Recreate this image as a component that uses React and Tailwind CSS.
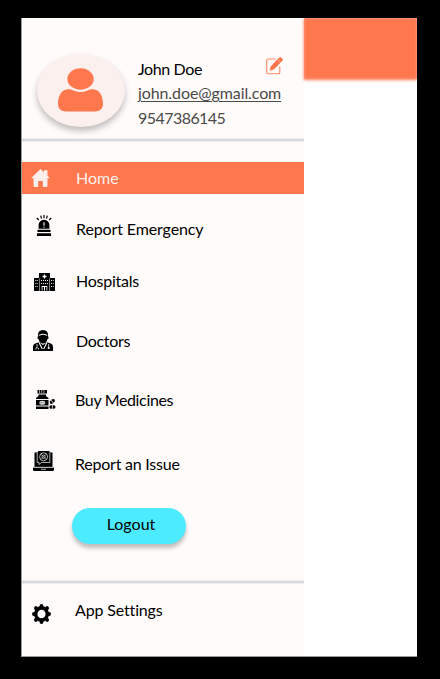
import React from "react";

function UserIcon() {
  return (
    <svg className="h-[44px] w-[46px]" viewBox="0 0 46 44" fill="#ff774d">
      <ellipse cx="22.5" cy="11" rx="13.2" ry="10.7" />
      <path d="M10.5 21.3c2.2-.5 3.600.5 5.600 1.400 4 1.800 8.800 1.800 12.800 0 2-.9 3.400-1.900 5.600-1.400C41 21.500 45 27 45 36c0 4.500-3 7.500-8 7.500H8c-5 0-8-3-8-7.500 0-9 4-14.500 10.500-14.700z" />
    </svg>
  );
}

function EditIcon() {
  return (
    <svg className="h-[18px] w-[17px]" viewBox="0 0 17 18" fill="none">
      <path d="M9.800 2H2Q.7 2 .7 3.300V15.500Q.7 16.800 2 16.800H12.500Q13.800 16.800 13.800 15.500V9.500" stroke="#ff8a66" strokeWidth="1.100" />
      <path d="M3.600 13.700 4.700 9.600 11.300 2.200 14.500 5.800 7.900 12.600ZM11.500 2 13.200.6Q14.500-.3 15.900.9T16.700 3.500L14.700 5.600Z" fill="#ff774d" />
    </svg>
  );
}

function HomeIcon() {
  return (
    <svg className="h-[18px] w-[19px]" viewBox="0 0 19 18" fill="#ffefec">
      <path d="M9.500 0 13 3.300V1.300h3.500v5.400L19 9.200H16.500V17q0 1-1 1H11.800V12H7.200v6H3.500q-1 0-1-1V9.200H0Z" />
    </svg>
  );
}

function SirenIcon() {
  return (
    <svg className="h-[21px] w-[16px]" viewBox="0 0 16 20" preserveAspectRatio="none">
      <path d="M8 0v3M4.700.6l.8 2.800M11.300.6l-.8 2.800M.7 2.800l2.200 2M15.300 2.800l-2.200 2" stroke="#000" strokeWidth="1.200" />
      <path d="M2.600 13V9.500a5.400 5 0 0 1 10.800 0V13ZM1.500 14h13v2.300h-13ZM1 17.300h14V20H1Z" />
      <path d="M8 7v3.300M8 11.200v1" stroke="#fff" strokeWidth="1.100" />
    </svg>
  );
}

function HospitalIcon() {
  return (
    <svg className="h-[18px] w-[21px]" viewBox="0 0 21 18">
      <path d="M0 5H5V0H16V5H21V18H0Z" />
      <path d="M10.500 1.500V5.500M8.500 3.500h4" stroke="#fff" strokeWidth="1.300" />
      <path d="M7 7.500h7M7 10.500h7M1.300 7.500H4M1.300 10.500H4M1.300 13.500H4M17 7.500h2.700M17 10.500h2.700M17 13.500h2.700" stroke="#fff" strokeWidth=".9" strokeDasharray="1.100 .9" />
      <path d="M5.500 5.500V18M15.500 5.500V18" stroke="#fff" strokeWidth=".5" />
      <path d="M7.700 13h5.600v4.500H7.700Z" fill="#fff" />
      <path d="M8.500 14h1.500v4H8.500ZM11 14h1.500v4H11Z" />
    </svg>
  );
}

function DoctorIcon() {
  return (
    <svg className="h-[21px] w-[20px]" viewBox="0 0 20 21">
      <path d="M5 6Q4.500 0 10 0t5 6l.7 2.200-1.200.8Q13.500 13.500 10 13.500T5.500 9L4.300 8.200Z" />
      <path d="M5.800 5.300Q10 3 14.200 5.300" stroke="#fff" strokeWidth="1" fill="none" />
      <path d="M0 21v-4q0-3 3-3.800l3-1L10 15l4-2.800 3 1q3 .8 3 3.800v4Z" />
      <path d="M6 12.500 9.300 19M14 12.500 10.700 19" stroke="#fff" strokeWidth="1.100" fill="none" />
      <path d="M4 14v2.500M3 19.500v-1.500q1.200-2 2.400 0v1.500M15.700 14v3" stroke="#fff" strokeWidth=".8" fill="none" />
      <circle cx="15.700" cy="18" r="1.100" fill="#fff" />
    </svg>
  );
}

function MedicineIcon() {
  return (
    <svg className="h-[19px] w-[20px]" viewBox="0 0 20 19">
      <path d="M1.500 0h9.500v3.500H1.500ZM2.500 4.500H10v1.500L12.500 8v1H0V8L2.500 6ZM0 10h12.500v5.500H0ZM0 16.500h12.500V19H0Z" />
      <path d="M3.500 0v3M5.700 0v3M7.900 0v3" stroke="#fff" strokeWidth=".6" />
      <ellipse cx="6.300" cy="12.800" rx="3" ry="2" fill="#ddd" />
      <path d="M4 12.800h4.500" stroke="#555" strokeWidth=".6" />
      <ellipse cx="16.300" cy="11.500" rx="2.900" ry="1.900" transform="rotate(-35 16.300 11.500)" />
      <path d="m15.300 10.200 2 2.700" stroke="#fff" strokeWidth=".8" />
      <rect x="13.300" y="15.300" width="6.200" height="3.400" rx="1.700" />
      <path d="M16.400 15v4" stroke="#fff" strokeWidth=".7" />
    </svg>
  );
}

function IssueIcon() {
  return (
    <svg className="h-[20px] w-[21px]" viewBox="0 0 21 20">
      <path d="M5 0H16.500V1.500H19.500V16H1.500V1.500H5Z" />
      <path d="M4.200 2V11.500H6V13.500L8.500 11.500H16.800V2" stroke="#ddd" strokeWidth=".8" fill="none" />
      <circle cx="10.600" cy="5.800" r="4" fill="none" stroke="#ddd" strokeWidth=".8" />
      <circle cx="10.600" cy="5.800" r="1.700" fill="none" stroke="#ddd" strokeWidth=".7" />
      <path d="m7.800 3 5.600 5.600M13.400 3 7.800 8.600" stroke="#ddd" strokeWidth=".6" />
      <path d="M0 16.500h21v2q0 1.500-1.500 1.500h-18Q0 20 0 18.500Z" />
      <path d="M1 16.300h19M8 18.300h5" stroke="#ddd" strokeWidth=".8" />
    </svg>
  );
}

function GearIcon() {
  return (
    <svg className="h-[20px] w-[19px]" viewBox="0 0 20 20" preserveAspectRatio="none">
      <g fill="none" stroke="#000" strokeLinecap="round">
        <circle cx="10" cy="10" r="6.100" strokeWidth="3.600" />
        <path d="M10 2v1M10 17v1M2 10h1M17 10h1M4.100 4.100l.7.7M15.200 15.200l.7.7M4.100 15.900l.7-.7M15.200 4.800l.7-.7" strokeWidth="4" />
      </g>
    </svg>
  );
}

const items = [
  { label: "Report Emergency", Icon: SirenIcon, row: "mt-[19px]", icon: "pl-[14px] pb-[7px]", text: "pl-[54px] tracking-[-0.12px]" },
  { label: "Hospitals", Icon: HospitalIcon, row: "mt-[20px]", icon: "pl-[12px] pt-[2px]", text: "pl-[54px] tracking-[-0.25px]" },
  { label: "Doctors", Icon: DoctorIcon, row: "mt-[28px]", icon: "pl-[11px] pb-[2px]", text: "pl-[54px] tracking-[-0.3px]" },
  { label: "Buy Medicines", Icon: MedicineIcon, row: "mt-[27px]", icon: "pl-[14px] pb-[2px]", text: "pl-[53px] tracking-[-0.35px]" },
  { label: "Report an Issue", Icon: IssueIcon, row: "mt-[32px]", icon: "pl-[11px] pb-[6px]", text: "pl-[53px] tracking-[-0.23px]" },
];

function Row({ label, Icon, row, icon, text }) {
  return (
    <div className={`grid h-8 shrink-0 items-center ${row}`}>
      <span className={`col-start-1 row-start-1 ${icon}`}><Icon /></span>
      <span className={`col-start-1 row-start-1 whitespace-nowrap pb-px ${text}`}>{label}</span>
    </div>
  );
}

function Divider() {
  return <div className="h-[2px] shrink-0 bg-[#d5d8dc] shadow-[0_0_2px_#c5cbd0]" />;
}

export default function App() {
  return (
    <div className="h-[679px] w-[440px] bg-black pl-[21px] pt-[18px] font-['Lato','Open_Sans',sans-serif] text-[16px] leading-6 text-black [&_svg]:block">
      <div className="flex h-[639px] w-[396px] overflow-hidden border-b border-l border-[#999] bg-white">
        <aside className="flex w-[281.5px] shrink-0 flex-col overflow-hidden bg-[#fffbfa]">
          <header className="flex h-[120.5px] shrink-0">
            <div className="ml-[15px] mt-[36px] flex h-[73px] w-[88px] shrink-0 justify-center rounded-[50%] bg-[#fcf0ee] pt-[14px] shadow-[0_4px_6px_rgba(0,0,0,0.25)]">
              <UserIcon />
            </div>
            <div className="ml-[13px] mt-[39px] flex w-[145px] flex-col whitespace-nowrap">
              <div className="flex h-[24px] justify-between">
                <span className="tracking-[-0.38px]">John Doe</span>
                <span><EditIcon /></span>
              </div>
              <span className="h-[25px] self-start tracking-[-0.1px] text-[#4b4949] underline underline-offset-2">john.doe@gmail.com</span>
              <span className="tracking-[-0.55px] text-[#4b4949]">9547386145</span>
            </div>
          </header>
          <Divider />
          <Row label="Home" Icon={HomeIcon} row="mt-[21.5px] bg-[#ff774d] text-[#ffefec]" icon="pl-[9px] pb-[1px]" text="pl-[54px] pt-px" />
          {items.map((item) => <Row key={item.label} {...item} />)}
          <button className="ml-[50px] mt-[28px] h-[36px] w-[114px] shrink-0 rounded-full bg-[#4debff] pb-[5px] pl-[4px] shadow-[0_4px_4px_rgba(0,0,0,0.25)]">Logout</button>
          <div className="h-[37px] shrink-0" />
          <Divider />
          <Row label="App Settings" Icon={GearIcon} row="mt-[11px]" icon="pl-[10px] pt-[8px]" text="pl-[53px] tracking-[-0.15px]" />
        </aside>
        <main className="flex-1">
          <div className="h-[61px] bg-[#ff774d] shadow-[0_1px_3px_#ff774d,inset_0_0_3px_#ffad94]" />
        </main>
      </div>
    </div>
  );
}
